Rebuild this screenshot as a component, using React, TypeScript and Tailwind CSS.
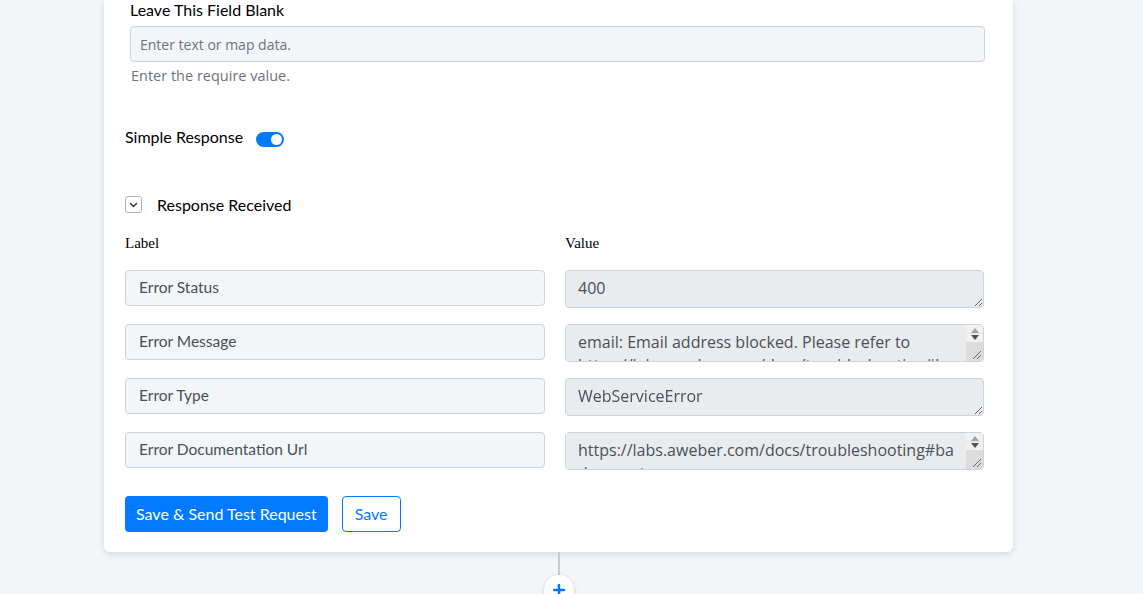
import React from "react";

const rows = [
  { label: "Error Status", value: "400", scroll: false },
  {
    label: "Error Message",
    value:
      "email: Email address blocked. Please refer to https://labs.aweber.com/docs/troubleshooting#badrequest",
    scroll: true,
  },
  { label: "Error Type", value: "WebServiceError", scroll: false },
  {
    label: "Error Documentation Url",
    value: "https://labs.aweber.com/docs/troubleshooting#badrequest",
    scroll: true,
  },
];

// classic scrollbar with spinner arrows, drawn over the textarea edge
const FakeScrollbar = () => (
  <div className="pointer-events-none absolute bottom-[1px] right-[1px] top-[1px] flex w-[17px] flex-col rounded-r-[3px] bg-[#dcdcdc]">
    <div className="flex h-[8px] items-end justify-center bg-[#f1f1f1]">
      <svg width="8" height="5" viewBox="0 0 8 5">
        <path d="M4 0 8 5H0z" fill="#a3a3a3" />
      </svg>
    </div>
    <div className="flex h-[9px] items-start justify-center border-t border-[#e3e3e3] bg-[#f1f1f1] pt-[1px]">
      <svg width="8" height="5" viewBox="0 0 8 5">
        <path d="M0 0h8L4 5z" fill="#505050" />
      </svg>
    </div>
    <div className="flex flex-1 items-end justify-end p-[2px]">
      <svg width="9" height="9" viewBox="0 0 9 9">
        <path d="M9 1 1 9M9 5 5 9" stroke="#6b6b6b" strokeWidth="1" />
      </svg>
    </div>
  </div>
);

const App = () => {
  return (
    <div className="h-[594px] overflow-hidden bg-[#f3f6f9] font-['Lato',sans-serif] text-[#212529]">
      <div className="ml-[104px] w-[909px] rounded-b-md bg-white pb-[20px] pl-[21px] pr-[28px] shadow-[0_2px_6px_rgba(0,0,0,0.12)]">
        {/* blank field */}
        <div className="pl-[5px]">
          <p className="text-[16px] leading-[19px] text-black">Leave This Field Blank</p>
          <input
            className="mt-[7px] h-[36px] w-full rounded-[4px] border border-[#ced4da] bg-[#f3f6f9] px-[9px] font-['Open_Sans',sans-serif] text-[14px] text-[#495057] placeholder:text-[#6c757d] outline-none"
            placeholder="Enter text or map data."
          />
          <p className="mt-[4px] pl-[1px] font-['Open_Sans',sans-serif] text-[14.5px] leading-[20px] text-[#6c757d]">
            Enter the require value.
          </p>
        </div>

        {/* simple response toggle */}
        <div className="mt-[41px] flex h-[20px] items-center">
          <span className="text-[16px] text-black">Simple Response</span>
          <span className="ml-[13px] mt-[5px] flex h-[15px] w-[28px] items-center justify-end rounded-full bg-[#007bff] pr-[2px]">
            <span className="h-[11px] w-[11px] rounded-full bg-white" />
          </span>
        </div>

        {/* response received */}
        <div className="mt-[49px] flex h-[17px] items-center">
          <span className="flex h-[17px] w-[17px] items-center justify-center rounded-[3px] border border-[#adb5bd]">
            <svg width="9" height="6" viewBox="0 0 9 6" fill="none">
              <path d="M1.5 1.5 4.5 4.5 7.5 1.5" stroke="#343a40" strokeWidth="1.5" strokeLinecap="round" strokeLinejoin="round" />
            </svg>
          </span>
          <span className="ml-[15px] text-[16px] text-black">Response Received</span>
        </div>

        <div className="mt-[20px] grid grid-cols-[420px_419px] gap-x-[20px] font-['Liberation_Serif',serif] text-[15px] leading-[20px] text-black">
          <span>Label</span>
          <span>Value</span>
        </div>

        <div className="mt-[17px] flex flex-col gap-[16px]">
          {rows.map((r) => (
            <div key={r.label} className="grid grid-cols-[420px_419px] items-start gap-x-[20px]">
              <div className="flex h-[36px] items-center rounded-[4px] border border-[#ced4da] bg-[#f3f6f9] px-[13px] text-[15.5px] text-[#495057]">
                {r.label}
              </div>
              <div className="relative">
                <textarea
                  readOnly
                  value={r.value}
                  className={
                    r.scroll
                      ? "block h-[38px] w-full rounded-[4px] border border-[#ced4da] bg-[#e9ecef] pb-[6px] pl-[12px] pr-[25px] pt-[6px] font-['Open_Sans',sans-serif] text-[16px] leading-[23px] text-[#495057] outline-none [scrollbar-width:none]"
                      : "block h-[38px] w-full rounded-[4px] border border-[#ced4da] bg-[#e9ecef] pb-[6px] pl-[12px] pr-[12px] pt-[6px] font-['Open_Sans',sans-serif] text-[16px] leading-[23px] text-[#495057] outline-none"
                  }
                />
                {r.scroll && <FakeScrollbar />}
              </div>
            </div>
          ))}
        </div>

        <div className="mt-[26px] flex gap-[14px]">
          <button className="h-[36px] rounded-[4px] bg-[#007bff] px-[11px] text-[16px] text-white">
            Save &amp; Send Test Request
          </button>
          <button className="h-[36px] w-[59px] rounded-[4px] border border-[#007bff] bg-white text-[16px] text-[#007bff]">
            Save
          </button>
        </div>
      </div>

      {/* connector to next step */}
      <div className="ml-[558px] h-[23px] w-[2px] bg-[#c8ccd0]" />
      <div className="ml-[544px] flex h-[30px] w-[30px] items-center justify-center rounded-full bg-white shadow-[0_1px_4px_rgba(0,0,0,0.15)]">
        <svg width="12" height="12" viewBox="0 0 12 12">
          <path d="M6 1v10M1 6h10" stroke="#007bff" strokeWidth="2.5" strokeLinecap="round" />
        </svg>
      </div>
    </div>
  );
};

export default App;
